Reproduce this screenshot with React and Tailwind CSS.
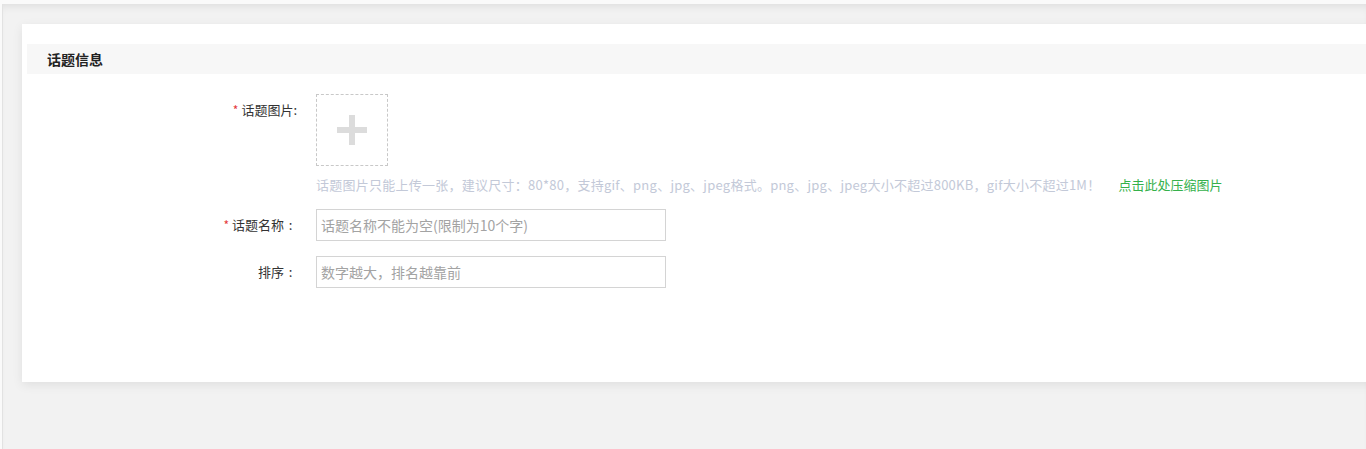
import React from "react";

const font = { fontFamily: '"Noto Sans CJK SC", "Liberation Sans", sans-serif' };

function Label({ required, children, colon }) {
  return (
    <div className="w-[275px] shrink-0 text-right text-[13px] leading-[18px] text-[#333]">
      {required && <span className="mr-[3px] text-[12px] text-[#e4393c]">*</span>}
      {children}
      {colon && <span className="inline-block w-[13px] text-center">:</span>}
    </div>
  );
}

function TextField({ placeholder }) {
  return (
    <input
      type="text"
      placeholder={placeholder}
      className="h-[32px] w-[350px] border border-[#d4d4d4] bg-white px-[4px] text-[14px] text-[#333] outline-none placeholder:text-[#a3a3a3]"
      style={font}
    />
  );
}

export default function App() {
  return (
    <div
      className="h-[449px] overflow-hidden border-t-4 border-l-2 border-[#fafafa] bg-[#f2f2f2]"
      style={font}
    >
      <div className="h-full border-l border-[#e2e2e2] pt-[20px] pl-[19px] shadow-[inset_0_7px_8px_-5px_rgba(0,0,0,0.09)]">
        {/* card */}
        <div className="mr-[-40px] bg-white pt-[20px] pb-[94px] pl-[5px] shadow-[0_3px_10px_rgba(0,0,0,0.08)]">
          <div className="flex h-[30px] items-center bg-[#f7f7f7] pl-[20px] text-[14px] font-bold text-[#222]">
            话题信息
          </div>

          <div className="-ml-[5px] mt-[20px] flex flex-col">
            {/* image */}
            <div className="flex">
              <div className="pt-[7px]">
                <Label required>话题图片:</Label>
              </div>
              <div className="ml-[19px]">
                <div className="flex h-[72px] w-[72px] items-center justify-center border border-dashed border-[#c8c8c8]">
                  <svg width="30" height="30" viewBox="0 0 30 30">
                    <rect x="0" y="12" width="30" height="6" fill="#dcdcdc" />
                    <rect x="12" y="0" width="6" height="30" fill="#dcdcdc" />
                  </svg>
                </div>
                <div className="mt-[9px] flex text-[13px] leading-[20px]">
                  <span className="tracking-[0.25px] text-[#c3c9d8]">
                    话题图片只能上传一张，建议尺寸：80*80，支持gif、png、jpg、jpeg格式。png、jpg、jpeg大小不超过800KB，gif大小不超过1M！
                  </span>
                  <a className="ml-[18px] cursor-pointer text-[#35b14b]">点击此处压缩图片</a>
                </div>
              </div>
            </div>

            {/* name */}
            <div className="mt-[14px] flex items-center">
              <Label required colon>话题名称</Label>
              <div className="ml-[19px]">
                <TextField placeholder="话题名称不能为空(限制为10个字)" />
              </div>
            </div>

            {/* sort */}
            <div className="mt-[15px] flex items-center">
              <Label colon>排序</Label>
              <div className="ml-[19px]">
                <TextField placeholder="数字越大，排名越靠前" />
              </div>
            </div>
          </div>
        </div>
      </div>
    </div>
  );
}
